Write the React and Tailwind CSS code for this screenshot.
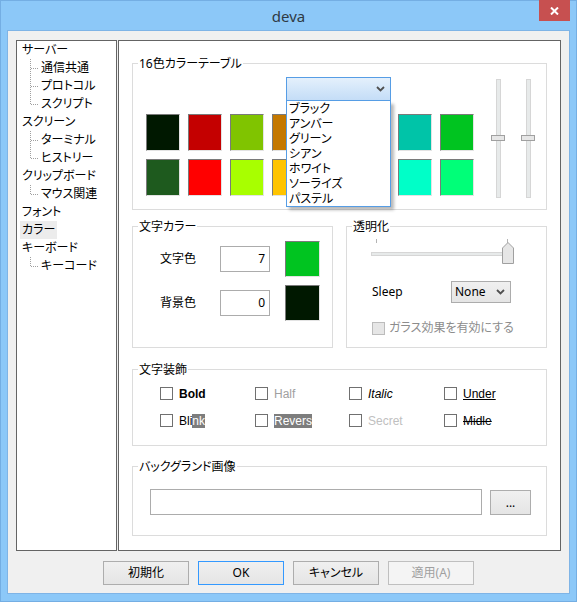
import React from "react";

const swatchRows = [
  ["#001800", "#c40000", "#80c400", "#c47800", "#1818c4", "#c400c4", "#00c4a8", "#00c420"],
  ["#1e5a1e", "#ff0000", "#a8ff00", "#ffc400", "#4848ff", "#ff48ff", "#00ffc8", "#00ff78"],
];

const tree = [
  { label: "サーバー", children: ["通信共通", "プロトコル", "スクリプト"] },
  { label: "スクリーン", children: ["ターミナル", "ヒストリー"] },
  { label: "クリップボード", children: ["マウス関連"] },
  { label: "フォント" },
  { label: "カラー", selected: true },
  { label: "キーボード", children: ["キーコード"] },
];

const presets = ["ブラック", "アンバー", "グリーン", "シアン", "ホワイト", "ソーライズ", "パステル"];

function Group({ title, className, children }) {
  return (
    <div className={`relative border border-[#dcdcdc] ${className}`}>
      <span className="absolute -top-[8px] left-[5px] bg-white px-[1px] text-[12px] leading-[15px] text-black">
        {title}
      </span>
      {children}
    </div>
  );
}

function Swatch({ color, className = "w-[34px] h-[37px]" }) {
  return (
    <div
      className={`${className} border border-t-[#7a7a7a] border-l-[#7a7a7a] border-r-[#e3e3e3] border-b-[#e3e3e3]`}
      style={{ backgroundColor: color }}
    />
  );
}

function Check({ disabled }) {
  return (
    <span
      className={`block w-[13px] h-[13px] shrink-0 border ${
        disabled ? "border-[#bcbcbc] bg-[#e6e6e6]" : "border-[#707070] bg-white"
      }`}
    />
  );
}

function Chevron({ className }) {
  return (
    <svg width="9" height="6" viewBox="0 0 9 6" className={className}>
      <polyline points="1,1 4.5,4.5 8,1" fill="none" stroke="#505050" strokeWidth="1.8" />
    </svg>
  );
}

function VSlider() {
  return (
    <div className="relative w-[14px] h-[119px] flex justify-center">
      <div className="w-[5px] h-full bg-[#e7eaea] border border-[#d6d6d6]" />
      <div className="absolute left-0 top-[56px] w-[14px] h-[6px] bg-[#e6e6e6] border border-[#a0a0a0]" />
    </div>
  );
}

function TreeLine({ last }) {
  return (
    <svg width="9" height="18" viewBox="0 0 9 18" className="shrink-0">
      <line x1="0.5" y1="0" x2="0.5" y2={last ? 9 : 18} stroke="#a0a0a0" strokeDasharray="1 1" />
      <line x1="1" y1="9.5" x2="9" y2="9.5" stroke="#a0a0a0" strokeDasharray="1 1" />
    </svg>
  );
}

function Button({ children, primary, disabled }) {
  return (
    <button
      className={`w-[86px] h-[24px] border text-[12px] leading-[14px] ${
        disabled
          ? "border-[#bfbfbf] bg-[#f4f4f4] text-[#a0a0a0]"
          : primary
          ? "border-[#3399ff] bg-linear-to-b from-[#f0f0f0] to-[#e5e5e5] text-black"
          : "border-[#adadad] bg-linear-to-b from-[#f0f0f0] to-[#e5e5e5] text-black"
      }`}
    >
      {children}
    </button>
  );
}

export default function App() {
  return (
    <div className="w-[577px] h-[602px] flex flex-col bg-[#8cc8f8] border border-[#74aee3] font-['Noto_Sans','Noto_Sans_CJK_JP',sans-serif] [font-feature-settings:'palt'] text-black">
      {/* title bar */}
      <div className="relative h-[29px] flex items-center justify-center">
        <span className="text-[15px] leading-[20px] text-[#2f3a44] pt-[1px]">deva</span>
        <button className="absolute right-[6px] -top-px w-[31px] h-[21px] bg-[#c75050] flex items-center justify-center">
          <svg width="9" height="8" viewBox="0 0 9 8">
            <path d="M1 0.5 L8 7.5 M8 0.5 L1 7.5" stroke="#fff" strokeWidth="2" />
          </svg>
        </button>
      </div>

      {/* client */}
      <div className="mx-[6px] mb-[7px] flex-1 flex flex-col bg-[#f0f0f0] border border-[#7fb4e6] pt-[9px] px-[8px] pb-[8px]">
        <div className="flex gap-[1px] h-[511px]">
          {/* tree */}
          <div className="w-[101px] h-full bg-white border border-[#646464] pt-[0px]">
            {tree.map((node) => (
              <div key={node.label}>
                <div className="h-[18px] flex items-center pl-[3px]">
                  <span
                    className={`px-[2px] h-[18px] text-[12px] leading-[18px] ${
                      node.selected ? "bg-[#ececec]" : ""
                    }`}
                  >
                    {node.label}
                  </span>
                </div>
                {node.children &&
                  node.children.map((c, i) => (
                    <div key={c} className="h-[18px] flex items-center pl-[13px]">
                      <TreeLine last={i === node.children.length - 1} />
                      <span className="ml-[2px] text-[12px] leading-[18px]">{c}</span>
                    </div>
                  ))}
              </div>
            ))}
          </div>

          {/* settings panel */}
          <div className="w-[443px] h-full bg-white border border-[#646464] pt-[22px] px-[13px] flex flex-col">
            {/* 16 color table */}
            <Group title="16色カラーテーブル" className="h-[147px] shrink-0">
              <div className="flex items-start pt-[15px] pl-[13px]">
                <div className="mt-[35px] grid grid-cols-8 gap-[8px]">
                  {swatchRows.flat().map((c, i) => (
                    <Swatch key={i} color={c} />
                  ))}
                </div>
                <div className="ml-[17px] flex gap-[16px]">
                  <VSlider />
                  <VSlider />
                </div>
              </div>

              {/* open combo */}
              <div className="absolute left-[153px] top-[13px] w-[105px] z-10">
                <div className="h-[24px] border border-[#569de5] bg-linear-to-b from-[#e4f0fc] to-[#c4ddf7] flex items-center justify-end pr-[5px]">
                  <Chevron />
                </div>
                <div className="bg-white border-x border-b border-[#569de5] pl-[2px] shadow-[3px_3px_3px_rgba(0,0,0,0.28)]">
                  {presets.map((p) => (
                    <div key={p} className="h-[15px] text-[12px] leading-[15px]">
                      {p}
                    </div>
                  ))}
                </div>
              </div>
            </Group>

            <div className="mt-[16px] flex gap-[13px] shrink-0">
              {/* text color */}
              <Group title="文字カラー" className="w-[201px] h-[122px] pt-[14px] pl-[27px]">
                <div className="flex flex-col gap-[8px]">
                  {[
                    ["文字色", "7", "#00c420"],
                    ["背景色", "0", "#001800"],
                  ].map(([l, v, c]) => (
                    <div key={l} className="h-[36px] flex items-center">
                      <span className="w-[60px] text-[12px] leading-[14px]">{l}</span>
                      <div className="w-[50px] h-[26px] border border-[#acacac] bg-white flex items-center justify-end pr-[4px] text-[12px] leading-[14px]">
                        {v}
                      </div>
                      <Swatch color={c} className="ml-[15px] w-[35px] h-[36px]" />
                    </div>
                  ))}
                </div>
              </Group>

              {/* transparency */}
              <Group title="透明化" className="w-[201px] h-[122px] pt-[12px] pl-[24px]">
                <div className="relative w-[142px] h-[24px]">
                  <div className="absolute left-[5px] top-0 w-px h-[4px] bg-[#b4b4b4]" />
                  <div className="absolute left-[136px] top-0 w-px h-[4px] bg-[#b4b4b4]" />
                  <div className="absolute left-0 top-[13px] w-[142px] h-[4px] bg-[#e7eaea] border border-[#d6d6d6]" />
                  <svg width="12" height="22" viewBox="0 0 12 22" className="absolute left-[131px] top-[3px]">
                    <path d="M0.5 21.5 V6 L6 0.5 L11.5 6 V21.5 Z" fill="#e6e6e6" stroke="#a0a0a0" />
                  </svg>
                </div>
                <div className="mt-[18px] h-[22px] flex items-center">
                  <span className="ml-[1px] w-[79px] text-[12px] leading-[14px]">Sleep</span>
                  <div className="w-[60px] h-[22px] border border-[#acacac] bg-linear-to-b from-[#f0f0f0] to-[#e5e5e5] flex items-center justify-between pl-[3px] pr-[5px] text-[12px] leading-[14px]">
                    <span>None</span>
                    <Chevron />
                  </div>
                </div>
                <div className="mt-[18px] flex items-center">
                  <span className="ml-[1px]" />
                  <Check disabled />
                  <span className="ml-[4px] text-[12px] leading-[14px] text-[#8c8c8c]">ガラス効果を有効にする</span>
                </div>
              </Group>
            </div>

            {/* text decoration */}
            <Group title="文字装飾" className="mt-[21px] h-[77px] shrink-0 pt-[17px] pl-[27px]">
              <div className="grid grid-cols-[95px_94px_95px_95px] gap-y-[14px] font-['Liberation_Sans','Noto_Sans_CJK_JP',sans-serif] text-[12px] leading-[14px]">
                <div className="h-[13px] flex items-center">
                  <Check />
                  <span className="ml-[6px] font-bold">Bold</span>
                </div>
                <div className="h-[13px] flex items-center">
                  <Check />
                  <span className="ml-[6px] text-[#a0a0a0]">Half</span>
                </div>
                <div className="h-[13px] flex items-center">
                  <Check />
                  <span className="ml-[6px] italic">Italic</span>
                </div>
                <div className="h-[13px] flex items-center">
                  <Check />
                  <span className="ml-[6px] underline">Under</span>
                </div>
                <div className="h-[13px] flex items-center">
                  <Check />
                  <span className="ml-[6px]">
                    Bli<span className="bg-[#7d7d7d] text-white">nk</span>
                  </span>
                </div>
                <div className="h-[13px] flex items-center">
                  <Check />
                  <span className="ml-[6px] bg-[#7d7d7d] text-white">Revers</span>
                </div>
                <div className="h-[13px] flex items-center">
                  <Check />
                  <span className="ml-[6px] text-[#c0c0c0]">Secret</span>
                </div>
                <div className="h-[13px] flex items-center">
                  <Check />
                  <span className="ml-[6px] line-through">Midle</span>
                </div>
              </div>
            </Group>

            {/* background image */}
            <Group title="バックグランド画像" className="mt-[20px] h-[70px] shrink-0 pt-[22px] pl-[17px]">
              <div className="flex items-start gap-[8px]">
                <div className="w-[332px] h-[26px] border border-[#acacac] bg-white" />
                <button className="mt-px w-[41px] h-[25px] border border-[#adadad] bg-linear-to-b from-[#f0f0f0] to-[#e5e5e5] text-[12px] leading-[14px]">
                  ...
                </button>
              </div>
            </Group>
          </div>
        </div>

        {/* buttons */}
        <div className="mt-[10px] flex justify-center gap-[9px]">
          <Button>初期化</Button>
          <Button primary>OK</Button>
          <Button>キャンセル</Button>
          <Button disabled>適用(A)</Button>
        </div>
      </div>
    </div>
  );
}
